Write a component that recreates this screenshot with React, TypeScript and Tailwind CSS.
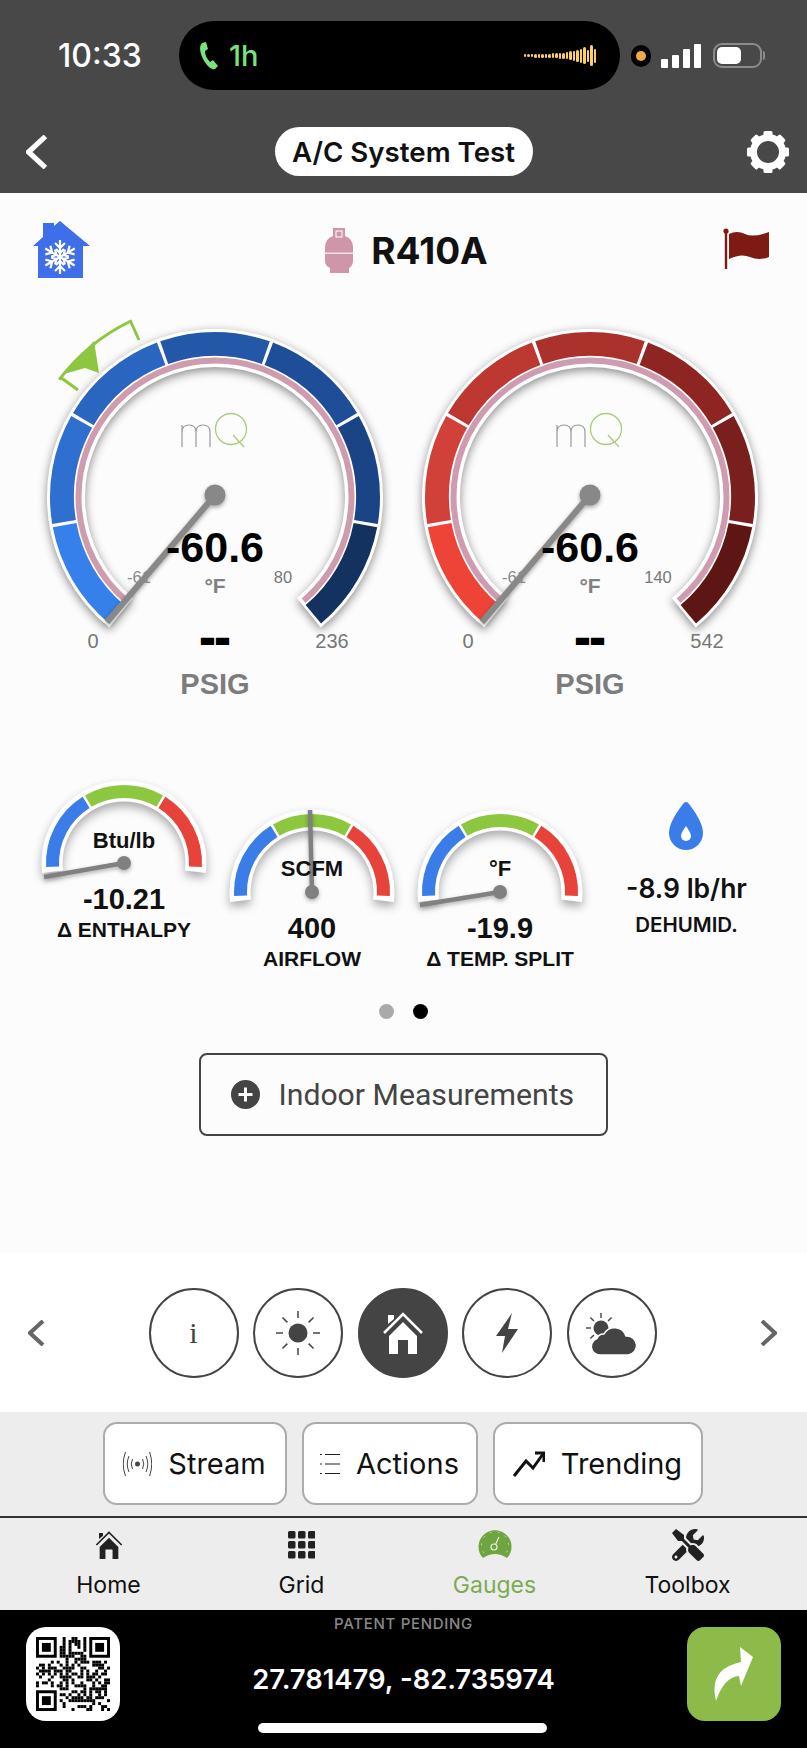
import { FaTools } from "react-icons/fa";

// angle is clockwise from 12 o'clock
function polar(cx: number, cy: number, r: number, deg: number) {
    const a = ((deg - 90) * Math.PI) / 180;
    return [cx + r * Math.cos(a), cy + r * Math.sin(a)];
}

function arc(cx: number, cy: number, r: number, from: number, to: number) {
    const [x1, y1] = polar(cx, cy, r, from);
    const [x2, y2] = polar(cx, cy, r, to);
    return `M${x1} ${y1} A${r} ${r} 0 ${to - from > 180 ? 1 : 0} 1 ${x2} ${y2}`;
}

const BLUES = ["#3580EA", "#2F6FD0", "#2A65C0", "#2358A8", "#1F4E98", "#1B4486", "#13325F"];
const REDS = ["#EE4438", "#D2403A", "#BC3831", "#AB312C", "#8E2523", "#791F1E", "#5E1614"];
const LIBERATION = "font-['Liberation_Sans',sans-serif]";

interface GaugeProps {
    colors: string[];
    max: string;
    mid: string;
    target?: boolean;
}

function Gauge({ colors, max, mid, target }: GaugeProps) {
    const cx = 188;
    const cy = 197;
    return (
        <svg width="375" height="400" viewBox="0 0 375 400" className={`overflow-visible ${LIBERATION}`}>
            <g className="drop-shadow-[0_3px_5px_rgba(0,0,0,0.45)]">
                <path d={arc(cx, cy, 149, -141, 141)} fill="none" stroke="#fff" strokeWidth="38" />
            </g>
            <path d={arc(cx, cy, 136.5, -139.5, 139.5)} fill="none" stroke="#CF9BAE" strokeWidth="6" />
            {colors.map((c, i) => (
                <path
                    key={c}
                    d={arc(cx, cy, 153, -140 + i * 40 + (i ? 0.6 : 0), -140 + (i + 1) * 40 - (i < 6 ? 0.6 : 0))}
                    fill="none"
                    stroke={c}
                    strokeWidth="24"
                />
            ))}
            {target && (
                <g>
                    <path d={arc(cx, cy, 195, -53, -26)} fill="none" stroke="#8DC63F" strokeWidth="3" />
                    <path d="M33 77 L51 90 M103 20 L112 40" fill="none" stroke="#8DC63F" strokeWidth="3" />
                    <path d="M37 74 L67 41 L72 73 L58 68 Z" fill="#8DC63F" />
                </g>
            )}
            {/* mQ logo */}
            <path
                d="M155 125 V147 M155 132 Q155 125 162 125 Q169 125 169 132 V147 M169 132 Q169 125 176 125 Q183 125 183 132 V147"
                fill="none"
                stroke="#9a9a9a"
                strokeWidth="1.2"
            />
            <circle cx="204" cy="129" r="15.5" fill="none" stroke="#A9CC7A" strokeWidth="1.3" />
            <path d="M206 135 L217 147" stroke="#A9CC7A" strokeWidth="1.3" />
            <g className="drop-shadow-[0_2px_2px_rgba(0,0,0,0.35)]">
                <line x1={cx} y1="195" x2="80" y2="322" stroke="#888888" strokeWidth="6" />
                <circle cx={cx} cy="195" r="10.5" fill="#888888" />
            </g>
            <text x={cx} y="262" textAnchor="middle" className="text-[43px] font-bold" fill="#000">-60.6</text>
            <text x={cx} y="293" textAnchor="middle" className="text-[21px] font-bold" fill="#808080">°F</text>
            <text x={cx} y="353" textAnchor="middle" className="text-[45px] font-bold" fill="#000" stroke="#000" strokeWidth="1.8">--</text>
            <text x={cx} y="394" textAnchor="middle" className="text-[29px] font-bold" fill="#7c7c7c">PSIG</text>
            <text x={cx - 122} y="348" textAnchor="middle" className="text-[20px]" fill="#777">0</text>
            <text x={cx + 117} y="348" textAnchor="middle" className="text-[20px]" fill="#777">{max}</text>
            <text x={cx - 76} y="283" textAnchor="middle" className="text-[16.5px]" fill="#888">-61</text>
            <text x={cx + 68} y="283" textAnchor="middle" className="text-[16.5px]" fill="#777">{mid}</text>
        </svg>
    );
}

interface SmallGaugeProps {
    unit: string;
    value: string;
    label: string;
    tipX: number;
    tipY: number;
    unitY: number;
    className?: string;
}

function SmallGauge({ unit, value, label, tipX, tipY, unitY, className }: SmallGaugeProps) {
    const cx = 94;
    const cy = 88;
    return (
        <div className={`flex w-[188px] flex-col items-center ${LIBERATION} ${className ?? ""}`}>
            <svg width="188" height="108" viewBox="0 0 188 108" className="overflow-visible">
                <g className="drop-shadow-[0_5px_5px_rgba(0,0,0,0.32)]">
                    <path d={arc(cx, cy, 72, -97, 97)} fill="none" stroke="#fff" strokeWidth="21" />
                </g>
                <path d={arc(cx, cy, 71.5, -93, -32)} fill="none" stroke="#3B7DE8" strokeWidth="13" />
                <path d={arc(cx, cy, 71.5, -30, 30)} fill="none" stroke="#8DC63F" strokeWidth="13" />
                <path d={arc(cx, cy, 71.5, 32, 93)} fill="none" stroke="#E8433A" strokeWidth="13" />
                <g className="drop-shadow-[0_2px_2px_rgba(0,0,0,0.3)]">
                    <line x1={cx} y1={cy} x2={cx + tipX} y2={cy + tipY} stroke="#808080" strokeWidth="4.5" />
                    <circle cx={cx} cy={cy} r="7" fill="#808080" />
                </g>
                <text x={cx} y={cy + unitY} textAnchor="middle" className="text-[22px] font-bold" fill="#111">
                    {unit}
                </text>
            </svg>
            <div className="text-[29px] leading-[32px] font-bold text-[#111]">{value}</div>
            <div className="text-[21px] leading-[30px] font-bold text-[#111]">{label}</div>
        </div>
    );
}

// 25x25 fake qr pattern, seeded so it is the same every time
const QR_CELLS: [number, number][] = (() => {
    const cells: [number, number][] = [];
    let s = 12345;
    for (let y = 0; y < 25; y++) {
        for (let x = 0; x < 25; x++) {
            s = (s * 1103515245 + 12345) & 0x7fffffff;
            const inFinder = (x < 8 && y < 8) || (x > 16 && y < 8) || (x < 8 && y > 16);
            if (!inFinder && (s >> 16) % 2 === 0) cells.push([x, y]);
        }
    }
    return cells;
})();

function QrCode() {
    const finders = [[0, 0], [18, 0], [0, 18]];
    return (
        <svg width="74" height="74" viewBox="0 0 25 25">
            {QR_CELLS.map(([x, y]) => (
                <rect key={`${x}-${y}`} x={x} y={y} width="1" height="1" fill="#000" />
            ))}
            {finders.map(([x, y]) => (
                <g key={`${x}-${y}`}>
                    <rect x={x + 0.5} y={y + 0.5} width="6" height="6" fill="none" stroke="#000" />
                    <rect x={x + 2} y={y + 2} width="3" height="3" fill="#000" />
                </g>
            ))}
        </svg>
    );
}

function Gear() {
    return (
        <svg width="44" height="44" viewBox="0 0 44 44">
            <circle cx="22" cy="22" r="14.5" fill="none" stroke="#fff" strokeWidth="7" />
            {[0, 45, 90, 135, 180, 225, 270, 315].map((d) => (
                <rect key={d} x="17.5" y="1" width="9" height="8" rx="1.5" fill="#fff" transform={`rotate(${d} 22 22)`} />
            ))}
        </svg>
    );
}

function SnowHouse() {
    return (
        <svg width="57" height="58" viewBox="0 0 57 58">
            <path d="M27 1 L57 26 H50 V58 H5 V26 H0 L10 17 V3 H21 V6 Z" fill="#3F6EEB" />
            {[0, 60, 120, 180, 240, 300].map((d) => (
                <g key={d} transform={`rotate(${d} 27 37)`} stroke="#fff" strokeWidth="2.2" fill="none">
                    <path d="M27 37 V20" />
                    <path d="M22 23 L27 28 L32 23" />
                    <path d="M23 29 L27 33 L31 29" />
                </g>
            ))}
        </svg>
    );
}

function Tank() {
    return (
        <svg width="28" height="45" viewBox="0 0 28 45">
            <path
                d="M8 0 H20 V8 Q28 11 28 19 V33 Q28 38 24 40 V45 H5 V40 Q0 38 0 33 V19 Q0 11 8 8 Z"
                fill="#CF96A9"
            />
            <rect x="11" y="3" width="6" height="6" fill="none" stroke="#fff" strokeWidth="1" />
            <rect x="0" y="24.5" width="28" height="1.5" fill="#F6E4EA" />
        </svg>
    );
}

function Flag() {
    return (
        <svg width="47" height="41" viewBox="0 0 47 41">
            <circle cx="3" cy="3" r="2.6" fill="#7D1A12" />
            <rect x="1.8" y="3" width="2.4" height="38" fill="#7D1A12" />
            <path d="M6 6 Q14 2 22 6 T46 4 V29 Q36 33 27 29 T6 31 Z" fill="#7D1A12" />
        </svg>
    );
}

function Chevron({ right, className }: { right?: boolean; className: string }) {
    return (
        <svg viewBox="0 0 17 26" className={className}>
            <path d={right ? "M2 1 L15 13 L2 25" : "M15 1 L2 13 L15 25"} fill="none" stroke="currentColor" strokeWidth="4" />
        </svg>
    );
}

function HomeGlyph({ color, cut }: { color: string; cut: string }) {
    return (
        <svg viewBox="0 0 40 42" className="h-full w-full">
            <path d="M1 21 L20 2 L39 21" fill="none" stroke={color} strokeWidth="2.5" />
            <path d="M5 12 V3 H11 V7 Z" fill={color} />
            <path d="M6 24 L20 10 L34 24 V42 H25 V28 H15 V42 H6 Z" fill={color} />
            <rect x="15" y="28" width="10" height="14" fill={cut} />
        </svg>
    );
}

function NavCircle({ active, children }: { active?: boolean; children: React.ReactNode }) {
    return (
        <div
            className={`flex h-[90px] w-[90px] items-center justify-center rounded-full border-2 border-[#444] ${
                active ? "bg-[#444]" : "bg-white"
            }`}
        >
            {children}
        </div>
    );
}

function ActionButton({ icon, label, width }: { icon: React.ReactNode; label: string; width: string }) {
    return (
        <div className={`flex h-[83px] items-center justify-center gap-[16px] rounded-[14px] border-2 border-[#ababab] bg-white ${width}`}>
            {icon}
            <span className="text-[29px] text-[#111]">{label}</span>
        </div>
    );
}

function TabItem({ icon, label, active }: { icon: React.ReactNode; label: string; active?: boolean }) {
    return (
        <div className="flex flex-col items-center">
            <div className="flex h-[34px] items-center">{icon}</div>
            <span className={`mt-[7px] text-[23px] leading-[32px] ${active ? "text-[#7CAB52]" : "text-[#111]"}`}>{label}</span>
        </div>
    );
}

const WAVE = [3, 3, 3, 4, 4, 4, 4, 4, 5, 5, 6, 6, 7, 9, 10, 12, 14, 17, 12, 21, 14];

export default function App() {
    return (
        <div className="flex h-[1748px] w-[807px] flex-col overflow-hidden bg-[#fcfcfc] font-['Inter',sans-serif]">
            {/* Header */}
            <header className="flex h-[193px] flex-col bg-[#484848] pt-[21px]">
                <div className="flex h-[69px] items-center">
                    <div className="w-[179px] pl-[58px] text-[32px] font-medium text-white">10:33</div>
                    <div className="flex h-[69px] w-[441px] items-center rounded-full bg-black pr-[24px] pl-[20px]">
                        <svg width="20" height="28" viewBox="0 0 20 28">
                            <path
                                d="M3 1 L7 0 L9 7 L6 9 Q6 15 11 20 L14 18 L19 24 L16 27 Q12 28 8 23 Q1 14 1 6 Q1 3 3 1 Z"
                                fill="#7BE27B"
                            />
                        </svg>
                        <span className="ml-[10px] text-[29px] font-medium text-[#7BE27B]">1h</span>
                        <div className="ml-auto flex h-[22px] items-center gap-[1px]">
                            {WAVE.map((h, i) => (
                                <div key={i} className="w-[2.5px] rounded-full bg-[#FFD060]" style={{ height: h }} />
                            ))}
                        </div>
                    </div>
                    <div className="ml-[11px] flex h-[22px] w-[20px] items-center justify-center rounded-full bg-black">
                        <div className="h-[10px] w-[10px] rounded-full bg-[#F2A74B]" />
                    </div>
                    <div className="ml-[10px] flex h-[24px] items-end gap-[4px]">
                        <div className="h-[9px] w-[7px] rounded-[1px] bg-white" />
                        <div className="h-[13px] w-[7px] rounded-[1px] bg-white" />
                        <div className="h-[19px] w-[7px] rounded-[1px] bg-white" />
                        <div className="h-[24px] w-[7px] rounded-[1px] bg-white" />
                    </div>
                    <div className="ml-[12px] flex h-[25px] w-[49px] items-center rounded-[9px] border-2 border-[#8b8b8b] p-[2px]">
                        <div className="h-full w-[24px] rounded-[5px] bg-white" />
                    </div>
                    <div className="ml-[1px] h-[9px] w-[2px] rounded-r-full bg-[#8b8b8b]" />
                </div>
                <div className="mt-[37px] grid h-[49px] grid-cols-[1fr_auto_1fr] items-center px-[17px]">
                    <Chevron className="ml-[9px] h-[34px] w-[22px] text-white" />
                    <div className="flex h-[49px] w-[258px] items-center justify-center rounded-full bg-white pt-[3px] text-[27.7px] font-semibold text-[#111]">
                        A/C System Test
                    </div>
                    <div className="justify-self-end">
                        <Gear />
                    </div>
                </div>
            </header>

            {/* Refrigerant row */}
            <div className="grid h-[107px] grid-cols-[1fr_auto_1fr] items-start px-[33px] pt-[27px]">
                <SnowHouse />
                <div className="mt-[8px] ml-[6px] flex items-center gap-[18px]">
                    <Tank />
                    <span className="text-[37px] leading-[45px] font-bold text-[#111]">R410A</span>
                </div>
                <div className="mt-[8px] mr-[4px] justify-self-end">
                    <Flag />
                </div>
            </div>

            {/* Main gauges */}
            <div className="flex pl-[27px]">
                <Gauge colors={BLUES} max="236" mid="80" target />
                <Gauge colors={REDS} max="542" mid="140" />
            </div>

            {/* Small gauges */}
            <div className="mt-[75px] flex px-[30px]">
                <SmallGauge unit="Btu/lb" value="-10.21" label="Δ ENTHALPY" tipX={-80} tipY={14} unitY={-15} />
                <SmallGauge unit="SCFM" value="400" label="AIRFLOW" tipX={-2} tipY={-82} unitY={-16} className="mt-[29px]" />
                <SmallGauge unit="°F" value="-19.9" label="Δ TEMP. SPLIT" tipX={-80} tipY={13} unitY={-16} className="mt-[29px]" />
                <div className="flex w-[188px] flex-col items-center pt-[27px]">
                    <svg width="34" height="48" viewBox="0 0 34 48">
                        <path d="M17 0 Q19 0 20 2 Q34 20 34 31 A17 17 0 0 1 0 31 Q0 20 14 2 Q15 0 17 0 Z" fill="#3B7DE8" />
                        <path d="M17 24 Q22 31 22 34 A5 5 0 0 1 12 34 Q12 31 17 24 Z" fill="#fff" />
                    </svg>
                    <div className="mt-[21px] ml-[2px] text-[26.5px] leading-[34px] font-semibold text-[#111]">-8.9 lb/hr</div>
                    <div className="mt-[8px] ml-[2px] text-[20.5px] leading-[24px] font-semibold text-[#111]">DEHUMID.</div>
                </div>
            </div>

            {/* Pager dots */}
            <div className="mt-[30px] flex justify-center gap-[19px] pr-[1px]">
                <div className="h-[15px] w-[15px] rounded-full bg-[#aaa]" />
                <div className="h-[15px] w-[15px] rounded-full bg-black" />
            </div>

            <div className="mt-[34px] flex justify-center pr-[1px]">
                <div className="flex h-[83px] w-[409px] items-center gap-[19px] rounded-[8px] border-2 border-[#444] pl-[30px]">
                    <svg width="29" height="29" viewBox="0 0 29 29">
                        <circle cx="14.5" cy="14.5" r="14.5" fill="#444" />
                        <path d="M14.5 7.5 V21.5 M7.5 14.5 H21.5" stroke="#fff" strokeWidth="3" />
                    </svg>
                    <span className="font-['Roboto',sans-serif] text-[30.2px] text-[#444]">Indoor Measurements</span>
                </div>
            </div>

            <div className="flex-1" />

            {/* Section nav */}
            <nav className="flex h-[159px] items-center justify-between bg-white pr-[30px] pl-[28px]">
                <Chevron className="h-[26px] w-[17px] text-[#666]" />
                <div className="flex gap-[14.5px]">
                    <NavCircle>
                        <span className="font-['Liberation_Serif',serif] text-[30px] text-[#444]">i</span>
                    </NavCircle>
                    <NavCircle>
                        <svg width="44" height="44" viewBox="0 0 44 44">
                            <circle cx="22" cy="22" r="9.5" fill="#444" />
                            {[0, 45, 90, 135, 180, 225, 270, 315].map((d) => (
                                <line key={d} x1="22" y1="0" x2="22" y2="7" stroke="#444" strokeWidth="1.5" transform={`rotate(${d} 22 22)`} />
                            ))}
                        </svg>
                    </NavCircle>
                    <NavCircle active>
                        <div className="h-[42px] w-[40px]">
                            <HomeGlyph color="#fff" cut="#444" />
                        </div>
                    </NavCircle>
                    <NavCircle>
                        <svg width="24" height="40" viewBox="0 0 24 40">
                            <path d="M17 0 L1 23 H10 L7 40 L23 16 H13 Z" fill="#444" />
                        </svg>
                    </NavCircle>
                    <NavCircle>
                        <svg width="52" height="44" viewBox="0 0 52 44">
                            <circle cx="15" cy="17" r="7.5" fill="#444" />
                            {[-90, -45, 0, 45, 135, 180, 225].map((d) => (
                                <line key={d} x1="15" y1="2" x2="15" y2="7" stroke="#444" strokeWidth="1.4" transform={`rotate(${d} 15 17)`} />
                            ))}
                            <path
                                d="M14 44 A8.5 8.5 0 0 1 11 27.5 A7 7 0 0 1 18 23 A12 12 0 0 1 40 25 A9.5 9.5 0 0 1 42 44 Z"
                                fill="#444"
                                stroke="#fff"
                                strokeWidth="1.5"
                            />
                        </svg>
                    </NavCircle>
                </div>
                <Chevron right className="h-[26px] w-[17px] text-[#666]" />
            </nav>

            {/* Action buttons */}
            <div className="flex h-[104px] justify-center gap-[15px] bg-[#EDEDED] pt-[10px] pr-[2px]">
                <ActionButton
                    width="w-[184px]"
                    label="Stream"
                    icon={
                        <svg width="29" height="30" viewBox="0 0 29 30" fill="none" stroke="#444" strokeWidth="1">
                            <circle cx="14.5" cy="15" r="2.5" fill="#444" stroke="none" />
                            <path d="M9.5 10 Q7 15 9.5 20 M19.5 10 Q22 15 19.5 20" />
                            <path d="M6 7 Q2.5 15 6 23 M23 7 Q26.5 15 23 23" />
                            <path d="M2.5 3 Q-2 15 2.5 27 M26.5 3 Q31 15 26.5 27" />
                        </svg>
                    }
                />
                <ActionButton
                    width="w-[176px]"
                    label="Actions"
                    icon={
                        <svg width="20" height="24" viewBox="0 0 20 24" stroke="#222" strokeWidth="1.2">
                            <path d="M0 2.5 H2 M5 2.5 H20 M0 12 H2 M5 12 H20 M0 21.5 H2 M5 21.5 H20" />
                        </svg>
                    }
                />
                <ActionButton
                    width="w-[210px]"
                    label="Trending"
                    icon={
                        <svg width="32" height="28" viewBox="0 0 32 28" fill="none" stroke="#111" strokeWidth="3">
                            <path d="M1 26 L13 11 L20 18 L30 4" />
                            <path d="M22 3 H31 V12" />
                        </svg>
                    }
                />
            </div>

            {/* Tab bar */}
            <div className="h-[94px] border-t-2 border-[#333] bg-[#EDEDED] pt-[10px] pl-[12px]">
                <div className="grid w-[772px] grid-cols-4">
                    <TabItem
                        label="Home"
                        icon={
                            <div className="h-[28px] w-[28px]">
                                <HomeGlyph color="#222" cut="#EDEDED" />
                            </div>
                        }
                    />
                    <TabItem
                        label="Grid"
                        icon={
                            <svg width="27" height="28" viewBox="0 0 27 28" fill="#222">
                                {[0, 10, 20].flatMap((y) =>
                                    [0, 10, 20].map((x) => <rect key={`${x}-${y}`} x={x} y={y} width="7.5" height="7.5" rx="1.5" />),
                                )}
                            </svg>
                        }
                    />
                    <TabItem
                        active
                        label="Gauges"
                        icon={
                            <svg width="34" height="30" viewBox="0 0 34 30">
                                <path d="M5 28 A16.5 16.5 0 1 1 29 28 Q17 20 5 28 Z" fill="#6EA540" />
                                <path d="M6 23 A13.5 13.5 0 1 1 28 23" fill="none" stroke="#D9E8C8" strokeWidth="0.8" strokeDasharray="2 6" />
                                <circle cx="16" cy="17" r="3" fill="none" stroke="#E8F2DC" strokeWidth="1.2" />
                                <path d="M17.5 14.5 L21 7" stroke="#E8F2DC" strokeWidth="1.2" />
                            </svg>
                        }
                    />
                    <TabItem label="Toolbox" icon={<FaTools className="h-[32px] w-[36px] text-[#222]" />} />
                </div>
            </div>

            {/* Footer */}
            <footer className="relative flex h-[138px] justify-between bg-black px-[26px] pt-[17px]">
                <div className="flex h-[94px] w-[94px] items-center justify-center rounded-[20px] bg-white">
                    <QrCode />
                </div>
                <div className="mt-[-13px] flex flex-col items-center">
                    <span className="text-[15px] leading-[20px] font-medium tracking-[0.7px] text-[#888]">PATENT PENDING</span>
                    <span className="mt-[27px] text-[27.4px] leading-[36px] font-semibold text-white">27.781479, -82.735974</span>
                </div>
                <div className="flex h-[94px] w-[94px] items-center justify-center rounded-[18px] bg-[#8DBB4A]">
                    <svg width="40" height="54" viewBox="0 0 40 54">
                        <path d="M2 54 Q-6 22 27 15 L26 0 L39 10 L27 39 L25 29 Q10 30 2 54 Z" fill="#fff" />
                    </svg>
                </div>
                <div className="absolute bottom-[15px] left-[258px] h-[10px] w-[289px] rounded-full bg-white" />
            </footer>
        </div>
    );
}
